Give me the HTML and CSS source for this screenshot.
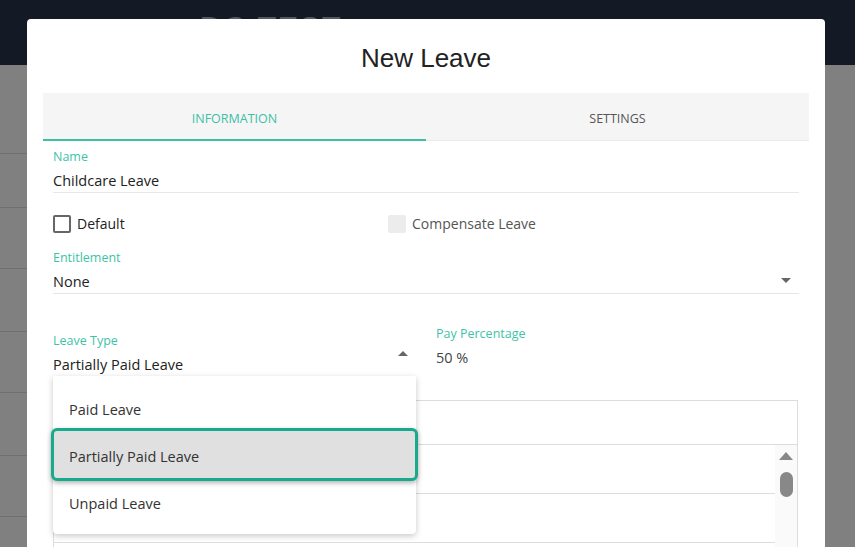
FILE: index.html
```html
<!DOCTYPE html>
<html>
<head>
<meta charset="utf-8">
<link rel="stylesheet" href="styles.css">
</head>
<body>
<div class="page">
  <header class="topbar"><span class="brand">DC TEST</span></header>
  <div class="backdrop">
    <div class="bg-list">
      <div class="bg-row r1"></div>
      <div class="bg-row r2"></div>
      <div class="bg-row r3"></div>
      <div class="bg-row r4"></div>
      <div class="bg-row r5"></div>
      <div class="bg-row r6"></div>
      <div class="bg-row r7"></div>
    </div>
  </div>
</div>

<div class="modal">
  <h1 class="modal-title">New Leave</h1>
  <div class="tabs">
    <div class="tab active">INFORMATION</div>
    <div class="tab">SETTINGS</div>
  </div>
  <div class="form">
    <div class="field">
      <div class="label">Name</div>
      <div class="value">Childcare Leave</div>
    </div>
    <div class="check-row">
      <label class="check"><span class="box"></span><span>Default</span></label>
      <label class="check disabled"><span class="box"></span><span>Compensate Leave</span></label>
    </div>
    <div class="field select">
      <div class="label">Entitlement</div>
      <div class="value">None<span class="caret down"></span></div>
    </div>
    <div class="two-col">
      <div class="field select focused">
        <div class="label">Leave Type</div>
        <div class="value">Partially Paid Leave<span class="caret up"></span></div>
        <div class="menu">
          <div class="item">Paid Leave</div>
          <div class="item selected">Partially Paid Leave</div>
          <div class="item">Unpaid Leave</div>
        </div>
      </div>
      <div class="field plain">
        <div class="label">Pay Percentage</div>
        <div class="value">50 %</div>
      </div>
    </div>
    <div class="table">
      <div class="thead"></div>
      <div class="tbody">
        <div class="rows">
          <div class="trow"></div>
          <div class="trow"></div>
        </div>
        <div class="scrollbar">
          <span class="sb-up"></span>
          <span class="sb-thumb"></span>
        </div>
      </div>
    </div>
  </div>
</div>
</body>
</html>
```

FILE: styles.css
```css
* { box-sizing: border-box; }
html, body { margin: 0; padding: 0; }
body {
  width: 855px;
  height: 547px;
  overflow: hidden;
  position: relative;
  background: #808080;
  font-family: "Open Sans", "Noto Sans", sans-serif;
  color: #222;
}
.page { display: flex; flex-direction: column; height: 547px; }
.topbar {
  height: 65px;
  background: #131a25;
  overflow: hidden;
  padding-left: 200px;
}
.brand {
  display: block;
  margin-top: 9px;
  font-family: "Liberation Sans", sans-serif;
  font-size: 30px;
  font-weight: 700;
  letter-spacing: 2px;
  color: #55585e;
  line-height: 36px;
}
.backdrop { flex: 1; background: #808080; }
.bg-list { width: 27px; }
.bg-row { border-bottom: 1px solid #6f6f6f; }
.r1 { height: 89px; }
.r2 { height: 54px; }
.r3 { height: 61px; }
.r4 { height: 63px; }
.r5 { height: 61px; }
.r6 { height: 63px; }
.r7 { height: 61px; }

.modal {
  position: absolute;
  left: 27px;
  top: 19px;
  width: 798px;
  height: 560px;
  background: #fff;
  border-radius: 4px;
  padding: 0 16px;
}
.modal-title {
  margin: 0;
  height: 74px;
  display: flex;
  align-items: center;
  justify-content: center;
  font-family: "Liberation Sans", Arial, sans-serif;
  font-size: 26px;
  font-weight: 400;
  color: #222;
  padding-top: 4px;
}
.tabs {
  display: flex;
  height: 48px;
  background: #f5f5f5;
  border-bottom: 1px solid #ececec;
}
.tab {
  flex: 1;
  display: flex;
  align-items: center;
  justify-content: center;
  font-size: 12.5px;
  color: #555;
  padding-top: 4px;
}
.tab.active {
  color: #3dbfa6;
  border-bottom: 2px solid #3dbfa6;
  margin-bottom: -1px;
}
.form { padding: 0 10px; }
.field {
  position: relative;
  border-bottom: 1px solid #e5e7eb;
  padding-top: 8px;
}
.label {
  font-size: 12.5px;
  line-height: 16px;
  color: #3ec3a9;
}
.value {
  position: relative;
  font-size: 14.5px;
  line-height: 22px;
  padding-top: 5px;
  color: #222;
  height: 27px;
}
.caret {
  position: absolute;
  width: 0;
  height: 0;
  border-left: 5px solid transparent;
  border-right: 5px solid transparent;
}
.caret.down { border-top: 5px solid #666; top: 12px; right: 8px; }
.caret.up { border-bottom: 5px solid #666; top: 2px; right: 8px; }

.check-row {
  display: flex;
  height: 49px;
  align-items: flex-start;
  padding-top: 22px;
}
.check {
  display: flex;
  align-items: center;
  gap: 6px;
  font-size: 14px;
  line-height: 18px;
  color: #222;
  width: 335px;
}
.check .box {
  width: 18px;
  height: 18px;
  border: 2px solid #666;
  border-radius: 2px;
}
.check.disabled { color: #555; }
.check.disabled .box { border: none; background: #ececec; }

.two-col {
  display: grid;
  grid-template-columns: 363px 363px;
  column-gap: 20px;
  align-items: start;
  margin-top: 31px;
}
.field.focused { border-bottom: 1px solid #3dbfa6; }
.field.plain { border-bottom: none; margin-top: -7px; }
.field.plain .value { color: #444; }

.menu {
  position: absolute;
  left: 0;
  top: 100%;
  width: 363px;
  background: #fff;
  border-radius: 0 0 4px 4px;
  box-shadow: 0 2px 6px rgba(0,0,0,0.22);
  padding: 8px 0 9px;
  z-index: 5;
}
.item {
  height: 47px;
  display: flex;
  align-items: center;
  padding-left: 16px;
  padding-top: 3px;
  font-size: 14.5px;
  color: #333;
}
.item.selected {
  height: 53px;
  margin: -3px -2px;
  padding-left: 15px;
  background: #e0e0e0;
  border: 3px solid #17aa8c;
  border-radius: 6px;
  box-shadow: 0 2px 5px rgba(0,0,0,0.3);
  position: relative;
}

.table {
  margin-top: 23px;
  width: 745px;
  border: 1px solid #ddd;
  border-bottom: none;
}
.thead { height: 44px; border-bottom: 1px solid #ddd; }
.tbody { display: flex; }
.rows { flex: 1; }
.trow { height: 49px; border-bottom: 1px solid #ddd; }
.scrollbar {
  width: 22px;
  height: 110px;
  background: #fafafa;
  display: flex;
  flex-direction: column;
  align-items: center;
  padding-top: 7px;
}
.sb-up {
  width: 0; height: 0;
  border-left: 7px solid transparent;
  border-right: 7px solid transparent;
  border-bottom: 8px solid #888;
}
.sb-thumb {
  margin-top: 12px;
  width: 13px;
  height: 25px;
  border-radius: 7px;
  background: #888;
}
```
